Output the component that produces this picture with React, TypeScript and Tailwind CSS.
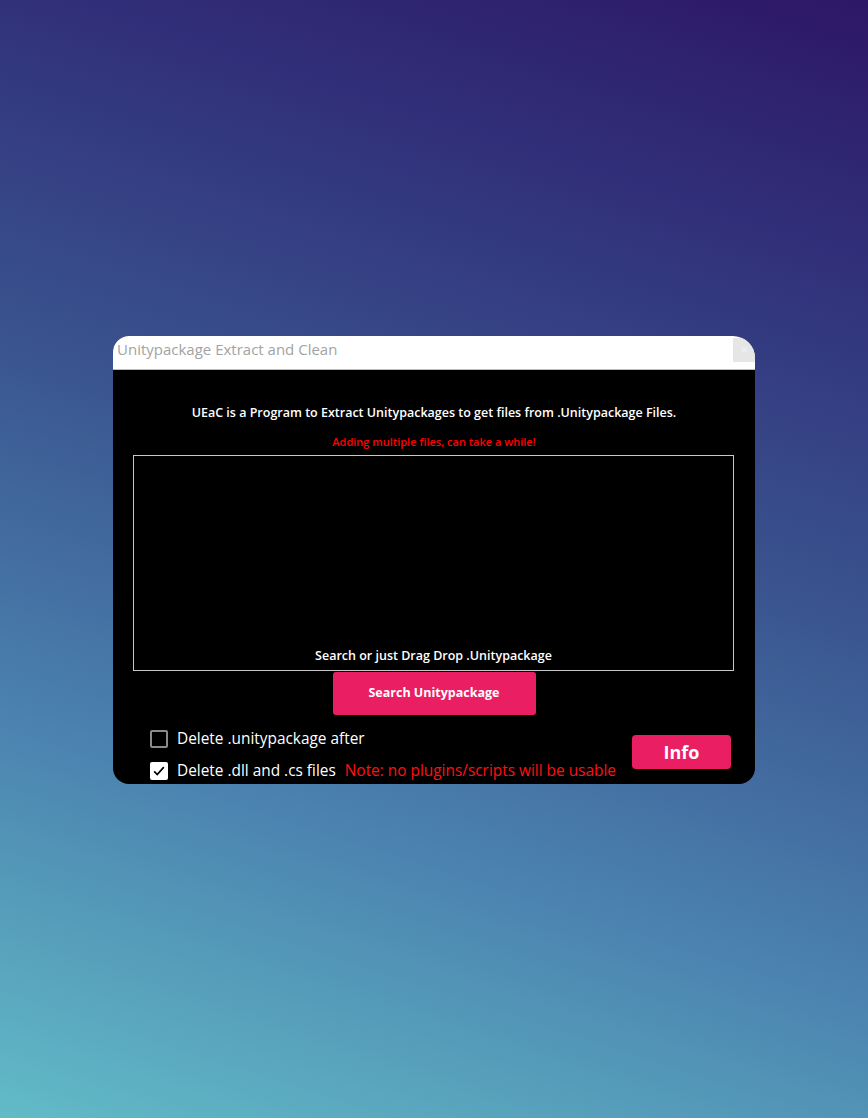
import React, { useState } from 'react';

const font = { fontFamily: '"Open Sans", "Noto Sans", sans-serif' };

// Checkbox row used in the bottom panel.
const CheckRow = ({ checked, onToggle, label, note }: { checked: boolean, onToggle: () => void, label: string, note?: string }) => (
    <label className="flex items-center h-[32px] cursor-pointer select-none" onClick={onToggle}>
        <span className={`flex items-center justify-center w-[18px] h-[18px] rounded-[2px] ${checked ? 'bg-white' : 'border-2 border-[#8a8a8a]'}`}>
            {checked && (
                <svg viewBox="0 0 16 16" className="w-[14px] h-[14px]">
                    <path d="M2.5 8.5 L6 12 L13.5 3.5" fill="none" stroke="#000" strokeWidth="2" />
                </svg>
            )}
        </span>
        <span className="ml-[9px] text-[15.4px] text-white">{label}</span>
        {note && <span className="ml-[9px] text-[15.4px] text-[#ff1010]">{note}</span>}
    </label>
);

export default function App() {
    const [deletePackage, setDeletePackage] = useState(false);
    const [deleteScripts, setDeleteScripts] = useState(true);

    return (
        <div
            className="w-full min-h-screen flex items-center justify-center bg-[linear-gradient(18deg,#62bbc7_0%,#4a80ae_30%,#3a5590_55%,#31317a_80%,#2d1766_100%)]"
            style={font}
        >
            <div className="w-[642px] h-[448px] mt-[2px] flex flex-col rounded-t-[16px] rounded-tr-[22px] rounded-b-[16px] overflow-hidden bg-black">
                {/* title bar */}
                <div className="h-[34px] shrink-0 flex items-start bg-white border-b border-[#bdbdbd]">
                    <span className="ml-[4px] mt-[2px] text-[15px] text-[#a3a3a3]">Unitypackage Extract and Clean</span>
                    <div className="ml-auto mt-[2px] w-[22px] h-[24px] bg-[#e6e6e6] flex items-center justify-center text-[12px] text-[#f5f5f5]">×</div>
                </div>

                {/* body */}
                <div className="flex-1 flex flex-col pt-[34px]">
                    <p className="text-center text-[12.5px] font-semibold text-white leading-[18px]">
                        UEaC is a Program to Extract Unitypackages to get files from .Unitypackage Files.
                    </p>
                    <p className="mt-[12px] text-center text-[11px] font-semibold text-[#ff0000] leading-[16px]">
                        Adding multiple files, can take a while!
                    </p>
                    <div className="mt-[5px] mx-[20px] mr-[21px] h-[216px] shrink-0 border-[1.5px] border-[#c8c8c8] flex flex-col justify-end items-center pb-[4px]">
                        <span className="text-[12.5px] font-semibold text-white">Search or just Drag Drop .Unitypackage</span>
                    </div>
                    <div className="flex justify-center mt-[1px]">
                        <button className="w-[203px] h-[43px] bg-[#e91e63] rounded-[3px] text-white text-[12.5px] font-bold">
                            Search Unitypackage
                        </button>
                    </div>

                    <div className="flex items-center mt-[8px] pl-[37px] pr-[24px]">
                        <div className="flex flex-col">
                            <CheckRow checked={deletePackage} onToggle={() => setDeletePackage(v => !v)} label="Delete .unitypackage after" />
                            <CheckRow
                                checked={deleteScripts}
                                onToggle={() => setDeleteScripts(v => !v)}
                                label="Delete .dll and .cs files"
                                note="Note: no plugins/scripts will be usable"
                            />
                        </div>
                        <button className="ml-auto w-[99px] h-[34px] bg-[#e91e63] rounded-[4px] text-white text-[18px] font-bold mt-[-6px]">
                            Info
                        </button>
                    </div>
                </div>
            </div>
        </div>
    );
}
